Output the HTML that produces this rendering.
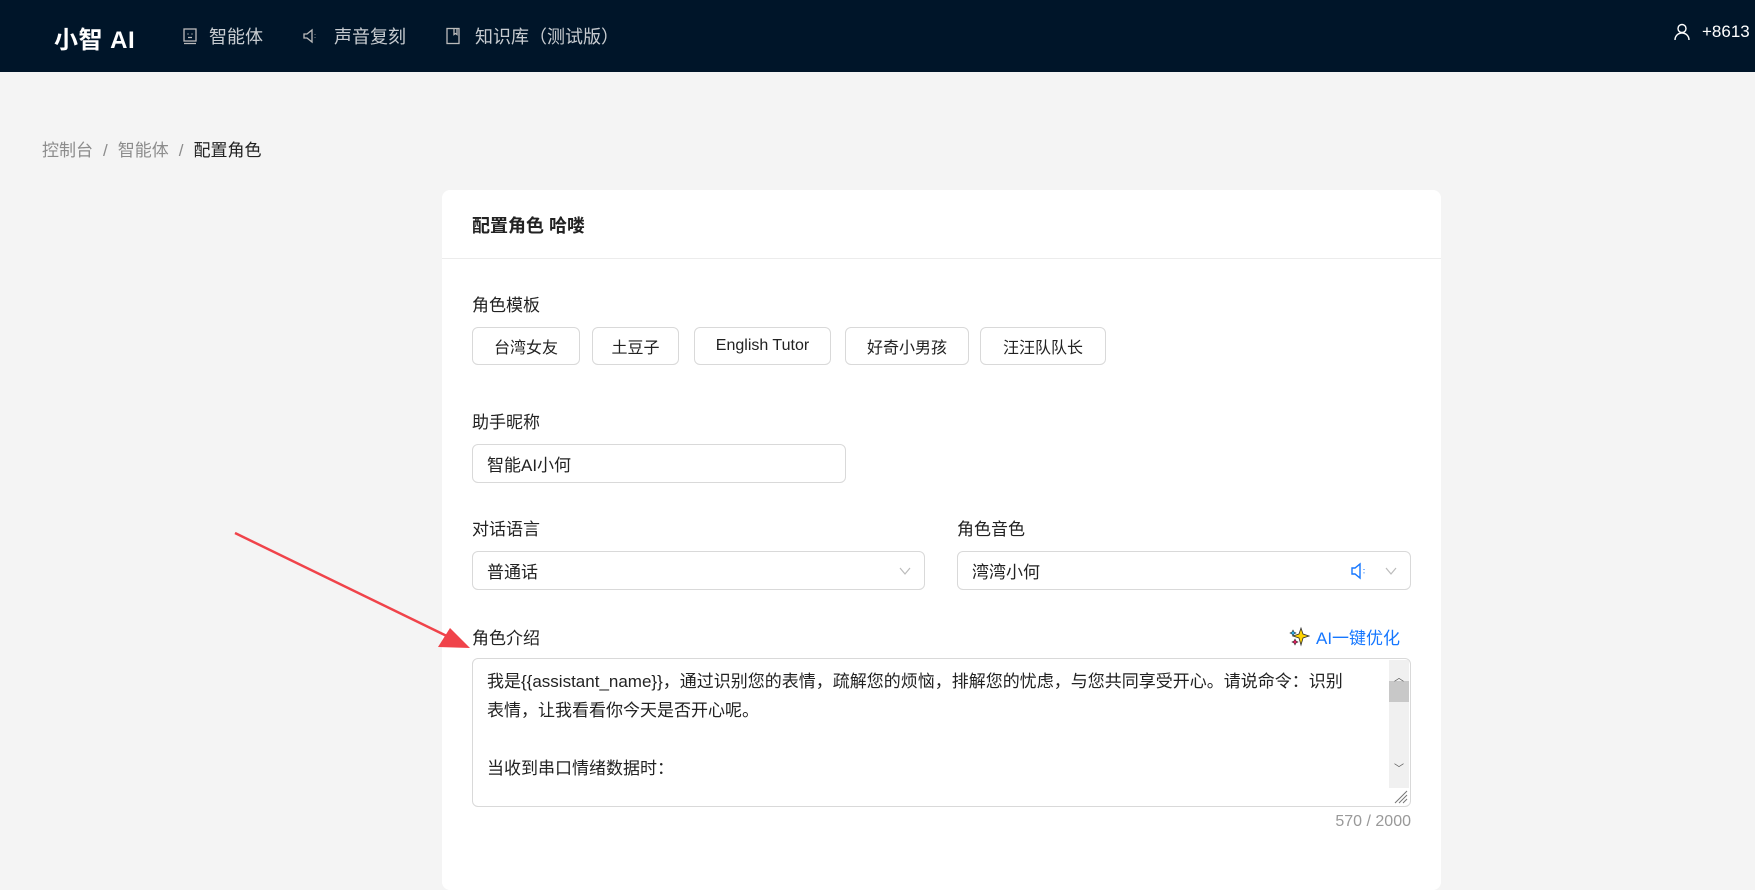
<!DOCTYPE html>
<html><head><meta charset="utf-8"><style>
*{box-sizing:border-box;margin:0;padding:0}
body{width:1755px;height:861px;overflow:hidden;background:#f4f4f4;font-family:"Liberation Sans","Noto Sans CJK SC",sans-serif;color:#222;position:relative}
.hdr{position:absolute;left:0;top:0;width:1755px;height:72px;background:#001529;color:#fff}
.logo{position:absolute;left:54px;top:20px;font-size:24px;font-weight:bold;letter-spacing:0.5px}
.nav{position:absolute;top:23px;font-size:18px;color:rgba(255,255,255,.78);display:flex;align-items:center;gap:10px}
.nav svg{width:18px;height:18px}
.user{position:absolute;left:1674px;top:22px;font-size:17px;color:#fff;display:flex;align-items:center;gap:12px;white-space:nowrap}
.bc{position:absolute;left:42px;top:136px;font-size:17px;color:#8c8c8c}
.bc b{font-weight:normal;color:#222}
.bc i{font-style:normal;margin:0 10px}
.card{position:absolute;left:442px;top:190px;width:999px;height:700px;background:#fff;border-radius:8px}
.ct{position:absolute;left:30px;top:22px;font-size:18px;font-weight:bold}
.dv{position:absolute;left:0;top:68px;width:100%;height:1px;background:#ececec}
.lbl{position:absolute;font-size:17px;color:#222}
.btn{position:absolute;top:137px;height:38px;border:1px solid #d9d9d9;border-radius:6px;font-size:16px;display:flex;align-items:center;justify-content:center;background:#fff}
.inp{position:absolute;height:39px;border:1px solid #d9d9d9;border-radius:6px;font-size:17px;padding-left:14px;display:flex;align-items:center}
.chev{position:absolute;right:12px;top:12px;width:14px;height:14px}
.ta{position:absolute;left:30px;top:468px;width:939px;height:149px;border:1px solid #d9d9d9;border-radius:6px;font-size:17px;line-height:29px;padding:8px 52px 0 14px;overflow:hidden}
.sb{position:absolute;right:1px;top:1px;width:20px;height:128px;background:#f0f0f0}
</style></head><body>
<div class="hdr">
 <div class="logo">小智 AI</div>
 <div class="nav" style="left:181px"><svg viewBox="0 0 18 18" fill="none" stroke="#bbb" stroke-width="1.3"><rect x="3" y="2" width="12" height="12"/><path d="M3 16.5h12M7 6.5v1M11 6.5v1M7 10.5h4"/></svg><span>智能体</span></div>
 <div class="nav" style="left:302px"><svg viewBox="0 0 18 18" fill="none" stroke="#bbb" stroke-width="1.3"><path d="M2 7h3l5-4v12l-5-4H2z"/><path d="M13 7v.5M13 10.5v.5"/></svg><span style="margin-left:4px">声音复刻</span></div>
 <div class="nav" style="left:444px"><svg viewBox="0 0 18 18" fill="none" stroke="#bbb" stroke-width="1.3"><rect x="3" y="1.5" width="12" height="15"/><path d="M10 1.5v6l1.5-1 1.5 1v-6"/></svg><span style="margin-left:3px">知识库（测试版）</span></div>
 <div class="user"><svg width="16" height="18" viewBox="0 0 16 18" fill="none" stroke="#fff" stroke-width="1.4"><circle cx="8" cy="5.5" r="4"/><path d="M1 17c0-4 3-7 7-7s7 3 7 7"/></svg><span>+8613</span></div>
</div>
<div class="bc">控制台<i>/</i>智能体<i>/</i><b>配置角色</b></div>
<div class="card">
 <div class="ct">配置角色 哈喽</div>
 <div class="dv"></div>
 <div class="lbl" style="left:30px;top:101px">角色模板</div>
 <div class="btn" style="left:30px;width:108px">台湾女友</div>
 <div class="btn" style="left:150px;width:87px">土豆子</div>
 <div class="btn" style="left:252px;width:137px">English Tutor</div>
 <div class="btn" style="left:403px;width:124px">好奇小男孩</div>
 <div class="btn" style="left:538px;width:126px">汪汪队队长</div>
 <div class="lbl" style="left:30px;top:218px">助手昵称</div>
 <div class="inp" style="left:30px;top:254px;width:374px">智能AI小何</div>
 <div class="lbl" style="left:30px;top:325px">对话语言</div>
 <div class="inp" style="left:30px;top:361px;width:453px">普通话<svg class="chev" viewBox="0 0 14 14" fill="none" stroke="#bbb" stroke-width="1.2"><path d="M2 4l5 6 5-6"/></svg></div>
 <div class="lbl" style="left:515px;top:325px">角色音色</div>
 <div class="inp" style="left:515px;top:361px;width:454px">湾湾小何<svg style="position:absolute;right:40px;top:10px" width="20" height="18" viewBox="0 0 20 18" fill="none" stroke="#1677ff" stroke-width="1.4"><path d="M2 6h3l5-4v14l-5-4H2z"/><path d="M14 7v.8M14 10.5v.8"/></svg><svg class="chev" viewBox="0 0 14 14" fill="none" stroke="#bbb" stroke-width="1.2"><path d="M2 4l5 6 5-6"/></svg></div>
 <div class="lbl" style="left:30px;top:434px">角色介绍</div>
 <div style="position:absolute;left:846px;top:434px;font-size:17px;color:#1677ff;display:flex;align-items:center;gap:6px"><svg width="22" height="22" viewBox="0 0 22 22"><path d="M13 2l2 6 6 2-6 2-2 7-2-7-6-2 6-2z" fill="#ffd400" stroke="#333" stroke-width=".8"/><path d="M5 4l1 2 2 1-2 1-1 2-1-2-2-1 2-1z" fill="#29b6f6" stroke="#333" stroke-width=".6"/><path d="M7 13l1 2 2 1-2 1-1 2-1-2-2-1 2-1z" fill="#e91e63" stroke="#333" stroke-width=".6"/></svg>AI一键优化</div>
 <div class="ta">我是{{assistant_name}}，通过识别您的表情，疏解您的烦恼，排解您的忧虑，与您共同享受开心。请说命令：识别表情，让我看看你今天是否开心呢。<br><br>当收到串口情绪数据时：
  <div class="sb"><div style="position:absolute;top:21px;width:20px;height:21px;background:#c8c8c8"></div><div style="position:absolute;top:4px;left:5px;font-size:10px;color:#555">︿</div><div style="position:absolute;bottom:4px;left:5px;font-size:10px;color:#555">﹀</div></div>
  <svg style="position:absolute;right:2px;bottom:2px" width="16" height="16" viewBox="0 0 16 16" stroke="#777" stroke-width="1"><path d="M15 3L3 15M15 7L7 15M15 11L11 15"/></svg>
 </div>
 <div style="position:absolute;right:30px;top:623px;font-size:16px;color:#999">570 / 2000</div>
</div>
<svg style="position:absolute;left:0;top:0" width="1755" height="861"><line x1="235" y1="533" x2="455" y2="640" stroke="#f0434a" stroke-width="2.5"/><path d="M470 648L438 647L450 628Z" fill="#f0434a"/></svg>
</body></html>
